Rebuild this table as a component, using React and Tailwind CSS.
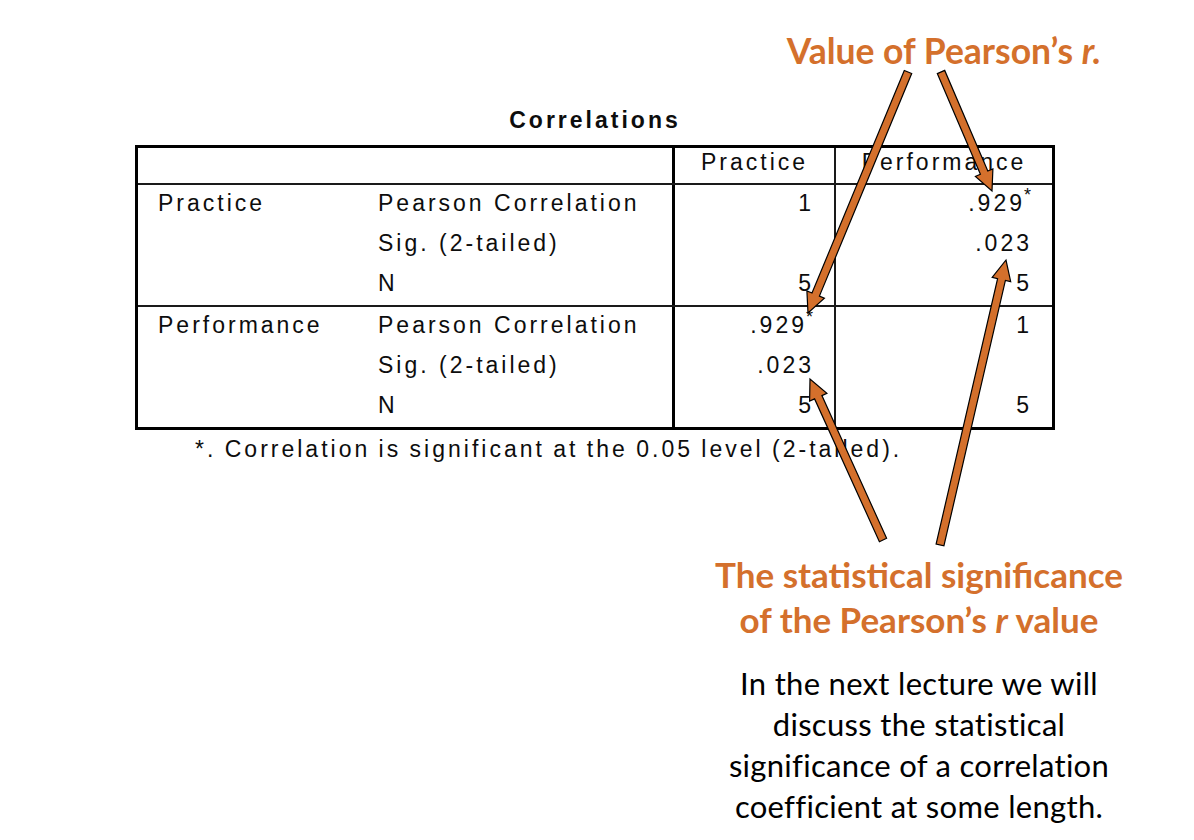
import React from "react";

const ORANGE = "#d4702c";

function arrowPoints(x1, y1, x2, y2, sw = 4, hw = 9.5, hl = 20) {
  const dx = x2 - x1;
  const dy = y2 - y1;
  const len = Math.hypot(dx, dy);
  const ux = dx / len;
  const uy = dy / len;
  const px = -uy;
  const py = ux;
  const bx = x2 - ux * hl;
  const by = y2 - uy * hl;
  const pts = [
    [x1 + px * sw, y1 + py * sw],
    [bx + px * sw, by + py * sw],
    [bx + px * hw, by + py * hw],
    [x2, y2],
    [bx - px * hw, by - py * hw],
    [bx - px * sw, by - py * sw],
    [x1 - px * sw, y1 - py * sw],
  ];
  return pts.map((p) => p[0].toFixed(1) + "," + p[1].toFixed(1)).join(" ");
}

const ARROWS = [
  [908, 72, 808, 313],
  [941, 72, 992, 191],
  [883, 540, 810, 379],
  [940, 545, 1006, 260],
];

function Num({ v, star }) {
  return (
    <span className="whitespace-nowrap">
      {v}
      {star && (
        <span className="text-[18px] leading-none tracking-normal align-top ml-[-1px] mr-[1px]">*</span>
      )}
    </span>
  );
}

function Cell({ children, align = "left" }) {
  const cls =
    align === "right"
      ? "h-[40px] flex items-center justify-end pr-5 pb-[4px]"
      : "h-[40px] flex items-center pl-5 pb-[4px]";
  return <div className={cls}>{children}</div>;
}

function Group({ label, c3, c4, last }) {
  return (
    <div className={"flex " + (last ? "" : "border-b-2 border-[#1a1a1a]")}>
      <div className="w-[220px]">
        <Cell>{label}</Cell>
        <Cell />
        <Cell />
      </div>
      <div className="w-[317px] border-r-[3px] border-black">
        <Cell>Pearson Correlation</Cell>
        <Cell>Sig. (2-tailed)</Cell>
        <Cell>N</Cell>
      </div>
      <div className="w-[161px] border-r-2 border-[#1a1a1a]">
        {c3.map((c, i) => (
          <Cell key={i} align="right">
            {c && <Num v={c[0]} star={c[1]} />}
          </Cell>
        ))}
      </div>
      <div className="flex-1">
        {c4.map((c, i) => (
          <Cell key={i} align="right">
            {c && <Num v={c[0]} star={c[1]} />}
          </Cell>
        ))}
      </div>
    </div>
  );
}

export default function App() {
  return (
    <div className="relative w-[1194px] h-[840px] bg-white overflow-hidden">
      <div className="pt-[31px]">
        {/* Top annotation */}
        <div className="ml-[694px] w-[500px] whitespace-nowrap text-center font-['Lato',sans-serif] font-bold text-[35.5px] leading-[40px]" style={{ color: ORANGE }}>
          Value of Pearson’s <span className="italic">r.</span>
        </div>

        {/* Table block */}
        <div className="ml-[135px] w-[920px] mt-[37px] font-['Liberation_Sans',Arial,sans-serif] text-[23px] tracking-[3px] text-[#0d0d0d]">
          <div className="text-center font-bold leading-[24px] mb-[13px]">Correlations</div>
          <div className="border-[3px] border-black">
            <div className="flex h-[37px] border-b-2 border-[#1a1a1a]">
              <div className="w-[537px] border-r-[3px] border-black" />
              <div className="w-[161px] border-r-2 border-[#1a1a1a] flex items-center justify-center pb-[6px]">Practice</div>
              <div className="flex-1 flex items-center justify-center pb-[6px]">Performance</div>
            </div>
            <Group
              label="Practice"
              c3={[["1", false], null, ["5", false]]}
              c4={[[".929", true], [".023", false], ["5", false]]}
            />
            <Group
              label="Performance"
              c3={[[".929", true], [".023", false], ["5", false]]}
              c4={[["1", false], null, ["5", false]]}
              last
            />
          </div>
          <div className="pl-[60px] mt-[6px] leading-[26px] [word-spacing:-1px]">
            *. Correlation is significant at the 0.05 level (2-tailed).
          </div>
        </div>

        {/* Bottom annotations */}
        <div className="ml-[669px] w-[500px] whitespace-nowrap mt-[90px] text-center font-['Lato',sans-serif] font-bold text-[35px] leading-[45px]" style={{ color: ORANGE }}>
          <div>The statistical significance</div>
          <div>
            of the Pearson’s <span className="italic">r</span> value
          </div>
        </div>
        <div className="ml-[669px] w-[500px] whitespace-nowrap mt-[21px] text-center font-['Lato',sans-serif] text-[31px] tracking-[0.3px] leading-[41px] text-black">
          <div>In the next lecture we will</div>
          <div>discuss the statistical</div>
          <div>significance of a correlation</div>
          <div>coefficient at some length.</div>
        </div>
      </div>

      {/* Arrows overlay */}
      <svg className="absolute inset-0 pointer-events-none" width="1194" height="840" viewBox="0 0 1194 840">
        {ARROWS.map((a, i) => (
          <polygon
            key={i}
            points={arrowPoints(a[0], a[1], a[2], a[3])}
            fill={ORANGE}
            stroke="#000"
            strokeWidth="1.2"
            strokeLinejoin="miter"
          />
        ))}
      </svg>
    </div>
  );
}
